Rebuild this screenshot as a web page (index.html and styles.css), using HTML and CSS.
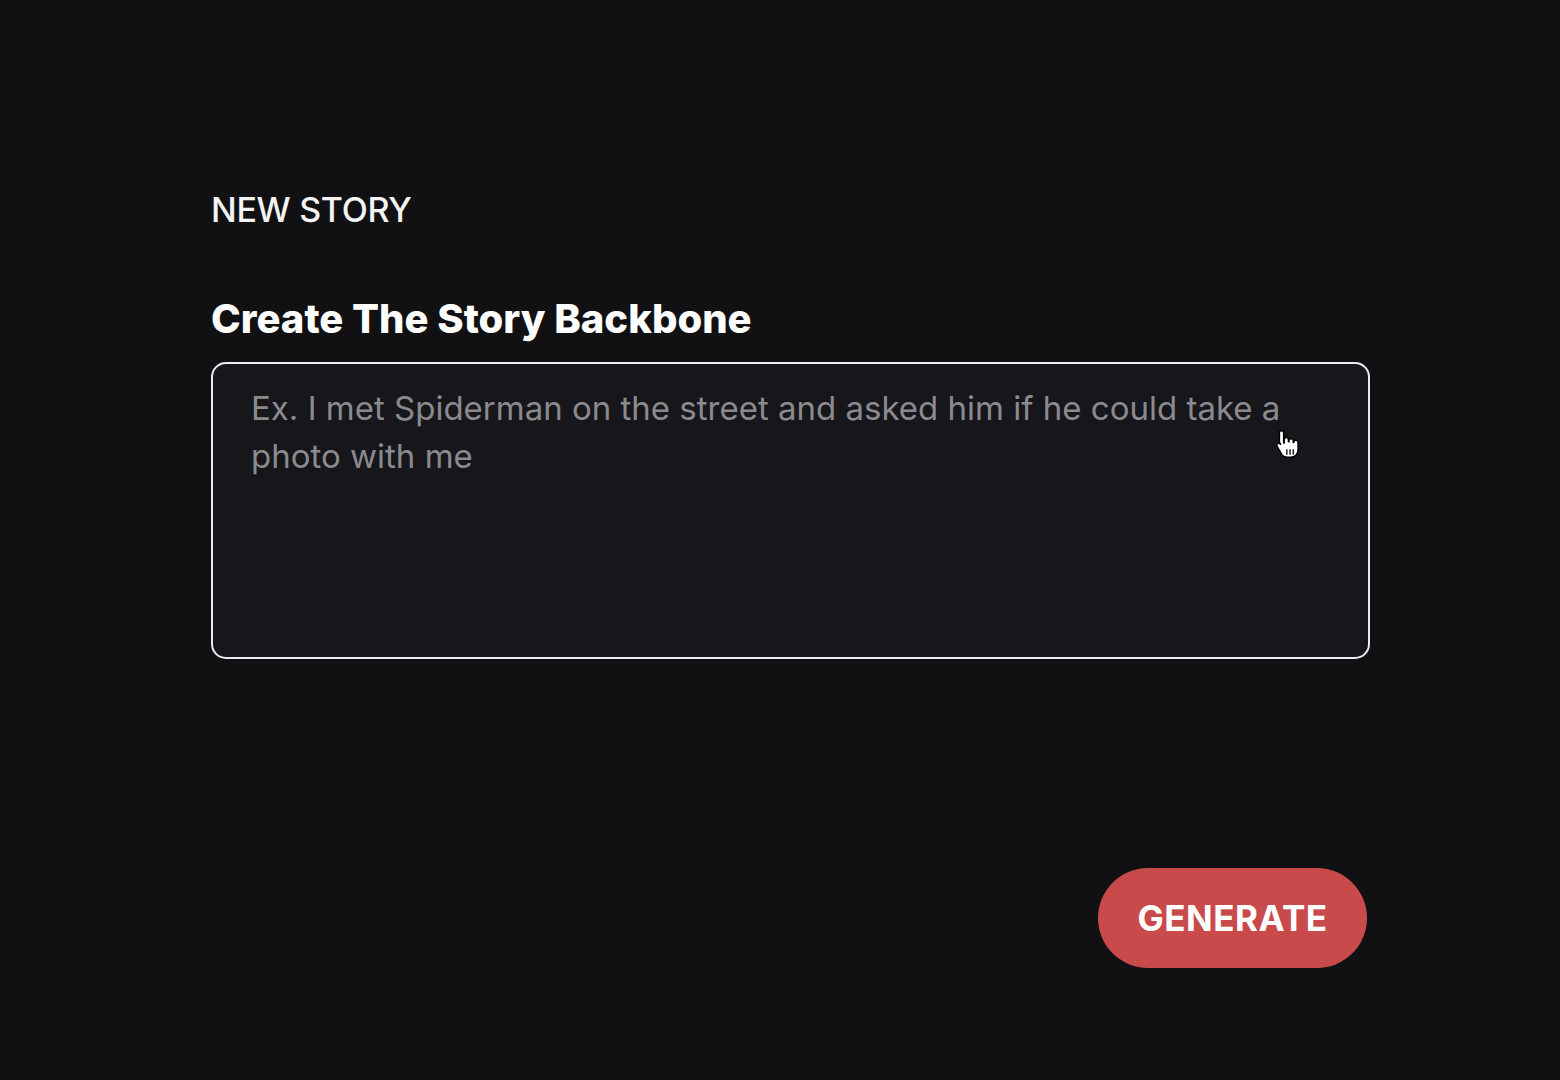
FILE: index.html
```html
<!DOCTYPE html>
<html>
<head>
<meta charset="utf-8">
<link rel="stylesheet" href="styles.css">
</head>
<body>
<main class="page">
  <h1 class="eyebrow">NEW STORY</h1>
  <h2 class="title">Create The Story Backbone</h2>
  <div class="field">
    <div class="placeholder">Ex. I met Spiderman on the street and asked him if he could take a photo with me</div>
    <svg class="cursor" width="28" height="32" viewBox="0 0 26 30">
      <path d="M6 2.5c1.1 0 2 .9 2 2V14h.5v-3c0-1.1.9-2 2-2s2 .9 2 2v2h.5v-1c0-1.1.9-2 2-2s2 .9 2 2v1.5h.5c0-1.1.9-2 2-2s2 .9 2 2v7c0 3.5-2.5 7-7 7h-3c-2.5 0-4-1-5.3-2.8L2 17.5c-.7-1-.5-2.2.4-2.8.9-.6 2-.4 2.7.5L4 13.5V4.5c0-1.1.9-2 2-2z" fill="#fff" stroke="#000" stroke-width="1.4" stroke-linejoin="round"/>
      <path d="M11 20v5M14 20v5M17 20v5" stroke="#000" stroke-width="1.2"/>
    </svg>
  </div>
  <div class="actions">
    <button class="generate">GENERATE</button>
  </div>
</main>
</body>
</html>
```

FILE: styles.css
```css
html, body {
  margin: 0;
  padding: 0;
  background: #111114;
  height: 100%;
}
body {
  font-family: Inter, "Noto Sans", sans-serif;
  color: #fff;
}
.page {
  width: 1159px;
  margin-left: 211px;
  padding-top: 188px;
  display: flex;
  flex-direction: column;
}
.eyebrow {
  margin: 0;
  font-size: 34px;
  font-weight: 500;
  letter-spacing: -0.3px;
  line-height: 44px;
  color: #f4f4f4;
}
.title {
  margin: 62px 0 0;
  font-size: 40px;
  font-weight: 800;
  letter-spacing: 0;
  line-height: 50px;
  color: #fff;
}
.field {
  position: relative;
  box-sizing: border-box;
  margin-top: 18px;
  height: 297px;
  border: 2px solid #ececee;
  border-radius: 15px;
  background: #16161b;
  padding: 20px 38px;
}
.placeholder {
  font-size: 33px;
  line-height: 48px;
  font-weight: 400;
  letter-spacing: 0;
  color: #8b8b8f;
  width: 1060px;
}
.cursor {
  position: absolute;
  left: 1062px;
  top: 64px;
}
.actions {
  display: flex;
  justify-content: flex-end;
  margin-top: 209px;
  padding-right: 3px;
}
.generate {
  width: 269px;
  height: 100px;
  border: none;
  border-radius: 50px;
  background: #c94a4a;
  color: #fff;
  font-family: Inter, "Noto Sans", sans-serif;
  font-size: 35px;
  font-weight: 700;
  letter-spacing: 0.5px;
}
```
